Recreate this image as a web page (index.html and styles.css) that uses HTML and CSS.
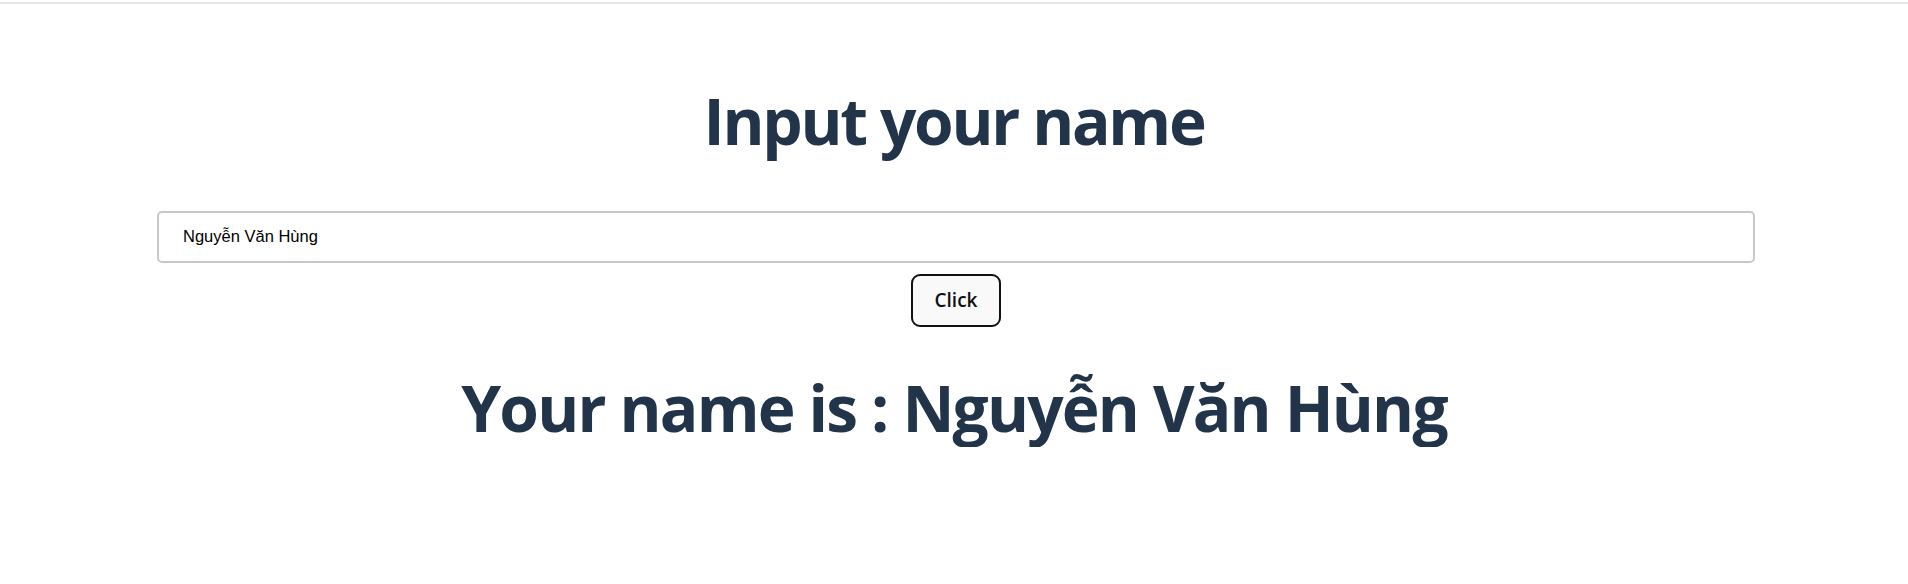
FILE: index.html
```html
<!DOCTYPE html>
<html lang="vi">
<head>
<meta charset="utf-8">
<title>Input your name</title>
<link rel="stylesheet" href="styles.css">
</head>
<body>
<div class="topbar"></div>
<main class="page">
  <h1 class="title">Input your name</h1>
  <div class="form">
    <input class="name-input" type="text" value="Nguyễn Văn Hùng">
    <button class="btn" type="button">Click</button>
  </div>
  <h2 class="result">Your name is : Nguyễn Văn Hùng</h2>
</main>
</body>
</html>
```
FILE: styles.css
```css
* { box-sizing: border-box; }
html, body { margin: 0; padding: 0; background: #fff; }
body { font-family: "Open Sans", "Noto Sans", sans-serif; }
.topbar { height: 2px; margin-top: 2px; background: #e8e4e4; }
.page { display: flex; flex-direction: column; align-items: center; }
.title, .result {
  margin: 0;
  color: #22344a;
  font-weight: 700;
  font-size: 64px;
  line-height: 1.2;
  text-align: center;
}
.title { margin-top: 79px; letter-spacing: -2.3px; }
.form {
  margin-top: 51px;
  width: 100%;
  padding-left: 157px;
  padding-right: 153px;
  display: flex;
  flex-direction: column;
  align-items: center;
  gap: 11px;
}
.name-input {
  width: 100%;
  height: 52px;
  border: 2px solid #c8c8c8;
  border-radius: 5px;
  padding: 0 24px;
  font-family: "Liberation Sans", Arial, sans-serif;
  font-size: 16.5px;
  color: #000;
  outline: none;
}
.btn {
  width: 90px;
  height: 53px;
  border: 2px solid #111;
  border-radius: 9px;
  background: #f9f9f9;
  font-family: "Open Sans", sans-serif;
  font-weight: 600;
  font-size: 19px;
  color: #111;
}
.result { margin-top: 43px; letter-spacing: -1.8px; }
```
